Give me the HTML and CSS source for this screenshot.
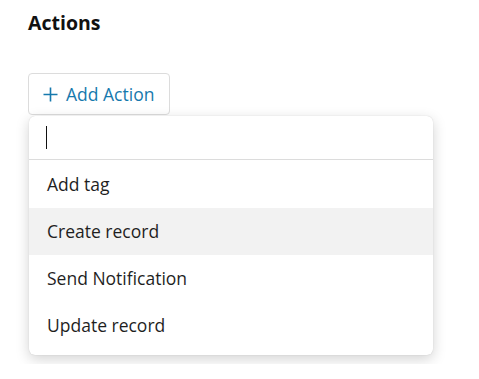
FILE: index.html
```html
<!DOCTYPE html>
<html lang="en">
<head>
    <meta charset="UTF-8">
    <meta name="viewport" content="width=device-width, initial-scale=1.0">
    <title>Actions</title>
    <link rel="stylesheet" href="styles.css">
</head>
<body>
    <div class="actions-section">
        <h2 class="section-title">Actions</h2>

        <div class="add-action">
            <button class="add-action-button">
                <svg class="plus-icon" width="15" height="15" viewBox="0 0 15 15">
                    <path d="M7.5 0.5V14.5M0.5 7.5H14.5" stroke="currentColor" stroke-width="1.6" fill="none"/>
                </svg>
                Add Action
            </button>

            <div class="action-menu">
                <div class="menu-search">
                    <span class="caret"></span>
                </div>
                <ul class="menu-list">
                    <li class="menu-item">Add tag</li>
                    <li class="menu-item active">Create record</li>
                    <li class="menu-item">Send Notification</li>
                    <li class="menu-item">Update record</li>
                </ul>
            </div>
        </div>
    </div>
</body>
</html>
```

FILE: styles.css
```css
body {
    margin: 0;
    background: #fff;
    font-family: "Open Sans", "Noto Sans", sans-serif;
    color: #1f1f1f;
}

.actions-section {
    padding: 9px 28px;
}

.section-title {
    margin: 0;
    font-size: 19.5px;
    font-weight: 700;
    line-height: 28px;
    color: #111;
}

.add-action {
    margin-top: 36px;
    display: flex;
    flex-direction: column;
    align-items: flex-start;
}

.add-action-button {
    display: flex;
    align-items: center;
    gap: 8px;
    height: 42px;
    padding: 0 15px 0 14px;
    background: #fff;
    border: 1px solid #dcdcdc;
    border-radius: 4px;
    font-family: inherit;
    font-size: 17.5px;
    color: #1679ad;
    cursor: pointer;
}

.plus-icon {
    flex-shrink: 0;
}

.action-menu {
    margin-top: 1px;
    margin-left: 1px;
    width: 404px;
    background: #fff;
    border-radius: 6px;
    box-shadow: 0 4px 14px rgba(0, 0, 0, 0.18), 0 0 1px rgba(0, 0, 0, 0.2);
    padding-bottom: 6px;
    overflow: hidden;
}

.menu-search {
    height: 43px;
    border-bottom: 1px solid #dcdcdc;
    display: flex;
    align-items: center;
    padding-left: 17px;
}

.caret {
    display: block;
    width: 1px;
    height: 23px;
    background: #111;
}

.menu-list {
    list-style: none;
    margin: 0;
    padding: 1px 0 0;
}

.menu-item {
    height: 47px;
    line-height: 47px;
    padding-left: 18px;
    font-size: 17.5px;
    color: #1f1f1f;
}

.menu-item.active {
    background: #f2f2f2;
}
```
